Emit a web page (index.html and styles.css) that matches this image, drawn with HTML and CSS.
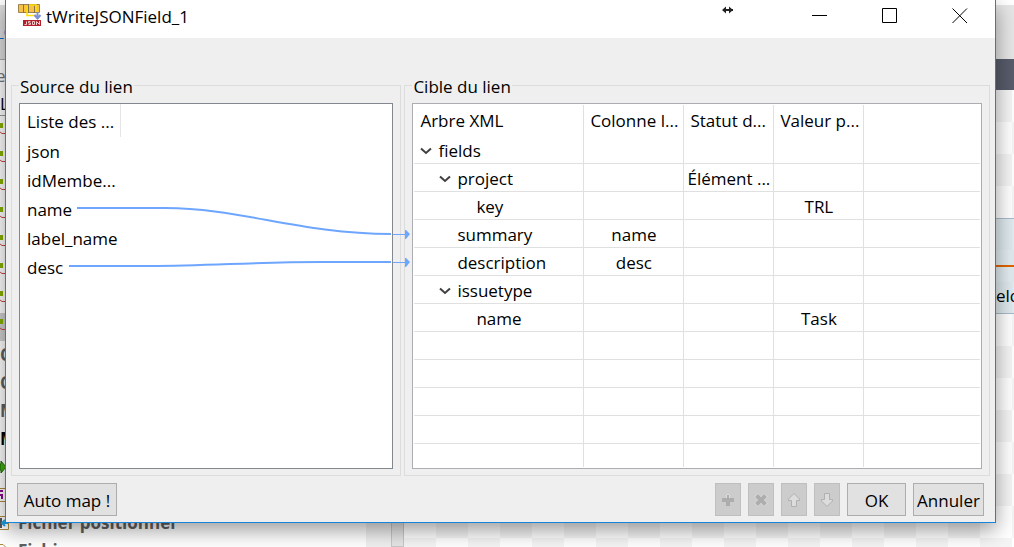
FILE: index.html
```
<!DOCTYPE html>
<html lang="fr">
<head>
<meta charset="utf-8">
<title>tWriteJSONField_1</title>
<link rel="stylesheet" href="styles.css">
</head>
<body>
<div class="workspace">
  <aside class="palette">
    <div class="palette-tools"><a class="palette-link" href="#">_e</a></div>
    <div class="palette-head"><span class="muted">e</span><span>L</span></div>
    <ul class="palette-tree">
      <li><svg class="mark" viewBox="0 0 6 28"><path d="M0 6h3v5H0z" fill="#86b200"/><path d="M0 15l2 1.500h4" fill="none" stroke="#c44"/></svg></li>
      <li><svg class="mark" viewBox="0 0 6 28"><path d="M0 6h3v5H0z" fill="#86b200"/><path d="M0 15l2 1.500h4" fill="none" stroke="#c44"/></svg></li>
      <li><svg class="mark" viewBox="0 0 6 28"><path d="M0 6h3v5H0z" fill="#86b200"/><path d="M0 15l2 1.500h4" fill="none" stroke="#c44"/></svg></li>
      <li><svg class="mark" viewBox="0 0 6 28"><path d="M0 6h3v5H0z" fill="#86b200"/><path d="M0 15l2 1.500h4" fill="none" stroke="#c44"/></svg></li>
      <li><svg class="mark" viewBox="0 0 6 28"><path d="M0 6h3v5H0z" fill="#86b200"/><path d="M0 15l2 1.500h4" fill="none" stroke="#c44"/></svg></li>
      <li><svg class="mark" viewBox="0 0 6 28"><path d="M0 6h3v5H0z" fill="#86b200"/><path d="M0 15l2 1.500h4" fill="none" stroke="#c44"/></svg></li>
      <li><svg class="mark" viewBox="0 0 6 28"><path d="M0 6h3v5H0z" fill="#86b200"/><path d="M0 15l2 1.500h4" fill="none" stroke="#c44"/></svg></li>
      <li class="selected"><svg class="mark" viewBox="0 0 6 28"><path d="M0 6h3v5H0z" fill="#86b200"/><path d="M0 15l2 1.500h4" fill="none" stroke="#c44"/></svg></li>
      <li>C</li>
      <li>C</li>
      <li>M</li>
      <li class="strong">M</li>
      <li><svg class="mark" viewBox="0 0 6 28"><path d="M0 11h1v-3l5 6-5 6v-3H0z" fill="#3fae10" stroke="#1c6b00"/></svg></li>
      <li><svg class="mark" viewBox="0 0 6 28"><path d="M0 7.500h6M0 20.500h6" stroke="#b08a3c"/><path d="M0 9h3v2H0zM0 13h3v5H1v-3H0z" fill="#8b0a8b"/></svg></li>
      <li><svg class="icon" viewBox="0 0 18 28"><path d="M0 7.500h8.500v13H0" fill="#fff" stroke="#b08a3c"/><path d="M1 9v10" stroke="#555" stroke-width="2"/><path d="M8 14H2m3-3l-3 3 3 3" fill="none" stroke="#1ba1e2" stroke-width="2"/></svg>Fichier positionnel</li>
      <li><svg class="icon" viewBox="0 0 18 28"><path d="M0 7.500h3l4 4v9H0" fill="#fff" stroke="#b08a3c"/></svg>Fichier</li>
    </ul>
  </aside>
  <div class="scroll-gutter"></div>
  <div class="sash"></div>
  <main class="designer">
    <div class="designer-tabs"></div>
    <div class="designer-bar"></div>
    <div class="canvas"><div class="node"><div class="node-title"></div><div class="node-label">eld</div></div></div>
  </main>
</div>

<section class="dialog" role="dialog" aria-labelledby="dialog-title">
  <header class="titlebar">
    <svg class="app-icon" viewBox="0 0 24 24">
      <path d="M.5.500h21v8H.5z" fill="#f7c24a" stroke="#9c8350"/>
      <path d="M5.500 0v9M10.500 0v9M16.500 0v9" stroke="#8a7448"/>
      <path d="M9 2v9.500h9M11 1h7v7" fill="none" stroke="#ffe000" stroke-width="1.500"/>
      <path d="M19.500 8v5M16.500 11l3 3.500 3-3.500" fill="none" stroke="#7f8fd6" stroke-width="2"/>
      <path d="M5 16h18v6H5z" fill="#b3202c"/>
      <path d="M8.500 17.500v3h-2M12.500 17.500h-2v1.500h2v1.500h-2M14.500 17.500h2v3h-2zM18.500 21v-3.500l3 3v-3.500" fill="none" stroke="#f3c8ca"/>
    </svg>
    <h1 id="dialog-title">tWriteJSONField_1</h1>
    <svg class="pointer" viewBox="0 0 12 8"><path d="M1 4h10" stroke="#222" stroke-width="2"/><path d="M0 4l4-3.500v7zM11 4L7 .5v7z" fill="#222"/></svg>
    <div class="window-buttons">
      <button aria-label="Réduire"><svg viewBox="0 0 16 16"><path d="M0 7.500h15"/></svg></button>
      <button aria-label="Agrandir"><svg viewBox="0 0 16 16"><path d="M.5.500h14v14H.5z"/></svg></button>
      <button aria-label="Fermer"><svg viewBox="0 0 16 16"><path d="M.5.500l14.500 14.500M15 .5L.5 15"/></svg></button>
    </div>
  </header>

  <div class="mapper">
    <fieldset class="group">
      <legend>Source du lien</legend>
      <div class="box source-box">
        <table class="source">
          <thead><tr><th>Liste des ...</th></tr></thead>
          <tbody>
            <tr><td>json</td></tr>
            <tr><td>idMembe...</td></tr>
            <tr><td>name</td></tr>
            <tr><td>label_name</td></tr>
            <tr><td>desc</td></tr>
          </tbody>
        </table>
      </div>
    </fieldset>
    <fieldset class="group">
      <legend>Cible du lien</legend>
      <div class="box target-box">
        <table class="target">
          <colgroup><col class="c-tree"><col class="c-link"><col class="c-status"><col class="c-value"><col></colgroup>
          <thead><tr><th>Arbre XML</th><th>Colonne l...</th><th>Statut d...</th><th>Valeur p...</th><th></th></tr></thead>
          <tbody>
            <tr><td class="l0"><svg class="chev" viewBox="0 0 12 8"><path d="M1 1.500l5 4.500 5-4.500"/></svg>fields</td><td></td><td></td><td></td><td></td></tr>
            <tr><td class="l1"><svg class="chev" viewBox="0 0 12 8"><path d="M1 1.500l5 4.500 5-4.500"/></svg>project</td><td></td><td>Élément ...</td><td></td><td></td></tr>
            <tr><td class="l3">key</td><td></td><td></td><td>TRL</td><td></td></tr>
            <tr><td class="l2">summary</td><td>name</td><td></td><td></td><td></td></tr>
            <tr><td class="l2">description</td><td>desc</td><td></td><td></td><td></td></tr>
            <tr><td class="l1"><svg class="chev" viewBox="0 0 12 8"><path d="M1 1.500l5 4.500 5-4.500"/></svg>issuetype</td><td></td><td></td><td></td><td></td></tr>
            <tr><td class="l3">name</td><td></td><td></td><td>Task</td><td></td></tr>
            <tr><td></td><td></td><td></td><td></td><td></td></tr>
            <tr><td></td><td></td><td></td><td></td><td></td></tr>
            <tr><td></td><td></td><td></td><td></td><td></td></tr>
            <tr><td></td><td></td><td></td><td></td><td></td></tr>
            <tr class="rest"><td></td><td></td><td></td><td></td><td></td></tr>
          </tbody>
        </table>
      </div>
    </fieldset>
    <svg class="links" width="400" height="210">
      <path d="M66 135h88C229 135 289 161 380 161" stroke-width="2"/>
      <path d="M58 193h80C200 193 240 189 310 189h70" stroke-width="2"/>
      <path d="M382 161.500h12M382 189.500h12"/>
      <path class="head" d="M394 157h1l4 4-4 5h-1zM394 185h1l4 4-4 5h-1z"/>
    </svg>
  </div>

  <footer class="actions">
    <button class="btn auto">Auto map !</button>
    <button class="btn tool" disabled aria-label="Ajouter"><svg viewBox="0 0 14 14"><path d="M5 1h4v4h4v4H9v4H5V9H1V5h4z" fill="#adadad"/><path d="M5.500 5V1.500h3V5" fill="none" stroke="#ddd"/></svg></button>
    <button class="btn tool" disabled aria-label="Supprimer"><svg viewBox="0 0 14 14"><path d="M2 2l10 10M12 2L2 12" stroke="#ddd" stroke-width="5"/><path d="M2.500 2.500l9 9M11.500 2.500l-9 9" stroke="#adadad" stroke-width="4"/></svg></button>
    <button class="btn tool" disabled aria-label="Monter"><svg viewBox="0 0 14 14"><path d="M7 .5l5.500 5.500v1.500h-3v6h-5v-6h-3V6z" fill="#dcdcdc" stroke="#b0b0b0"/></svg></button>
    <button class="btn tool" disabled aria-label="Descendre"><svg viewBox="0 0 14 14"><path d="M7 13.500l5.500-5.500V6.500h-3v-6h-5v6h-3V8z" fill="#dcdcdc" stroke="#b0b0b0"/></svg></button>
    <button class="btn ok">OK</button>
    <button class="btn cancel">Annuler</button>
  </footer>
</section>
</body>
</html>
```
FILE: styles.css
```
* { box-sizing: border-box; }

body {
  margin: 0;
  height: 100vh;
  overflow: hidden;
  position: relative;
  font: 17px/24px "Open Sans", "Noto Sans", sans-serif;
  color: #000;
  background: #fff;
}

svg { display: block; flex: none; }

/* Workspace behind the dialog */
.workspace {
  display: grid;
  grid-template-columns: 366px 25px 13px 1fr;
  height: 100%;
}
.palette { min-width: 0; overflow: hidden; }
.palette-tools {
  height: 60px;
  padding-top: 14px;
  border-top: 5px solid #fff;
  border-bottom: 1px solid #aaa;
  background: #ddd;
}
.palette-link { color: #0066cc; text-decoration: none; margin-left: -4px; }
.palette-head {
  display: flex;
  flex-direction: column;
  gap: 4px;
  height: 56px;
  padding-top: 4px;
  border-bottom: 1px solid #999;
}
.muted { color: #777; margin-left: -4px; }
.palette-tree {
  margin: 0;
  padding: 1px 0 0;
  list-style: none;
  font-weight: bold;
  color: #606060;
}
.palette-tree li { display: flex; align-items: center; height: 28px; }
.palette-tree .selected { background: #d0d0d0; }
.palette-tree .strong { color: #000; }
.mark { width: 6px; height: 28px; }
.icon { width: 18px; height: 28px; }
.scroll-gutter { background: #f0f0f0; }
.sash { background: #e6e6e6; border: 1px solid #c8c8c8; }
.designer { display: flex; flex-direction: column; min-width: 0; }
.designer-tabs { height: 59px; border-top: 5px solid #fff; background: #e6e6e6; }
.designer-bar { height: 31px; background: #585c6b; }
.canvas {
  flex: 1;
  padding-top: 128px;
  background: repeating-conic-gradient(#fff 0 25%, #f5f5f5 0 50%) 0 0 / 64px 64px;
}
.node {
  border: solid #a9bccb;
  border-width: 1px 0;
  background: rgba(214, 228, 233, .7);
}
.node-title { height: 48px; border-bottom: 2px solid #e06400; }
.node-label { height: 46px; padding: 17px 0 0 592px; white-space: nowrap; overflow: hidden; }

/* Dialog window */
.dialog {
  position: absolute;
  inset: 0 18px 24px 5px;
  display: flex;
  flex-direction: column;
  border: 1px solid #1883d7;
  border-top: 0;
  background: #efefef;
  box-shadow: 0 7px 20px rgba(0, 0, 0, .4);
}
.titlebar {
  position: relative;
  display: flex;
  align-items: flex-start;
  height: 38px;
  padding: 4px 0 0 12px;
  background: #fff;
}
.app-icon { width: 24px; height: 24px; }
.titlebar h1 { margin: 0 auto 0 4px; font-size: 17px; font-weight: normal; line-height: 26px; }
.pointer { position: absolute; top: 6px; right: 261px; width: 12px; height: 8px; }
.window-buttons { display: flex; }
.window-buttons button {
  display: flex;
  justify-content: center;
  align-items: center;
  width: 70px;
  height: 24px;
  padding: 0;
  border: 0;
  background: none;
}
.window-buttons svg { width: 16px; height: 16px; fill: none; stroke: #000; }

.mapper {
  position: relative;
  flex: 1;
  display: grid;
  grid-template-columns: 2fr 3fr;
  gap: 3px;
  padding: 35px 5px 0;
}
.group {
  display: flex;
  min-width: 0;
  margin: 0;
  padding: 6px 7px;
  border: 1px solid #dcdcdc;
}
.group legend { padding: 4px 1px 0; line-height: 20px; }
.box { flex: 1; min-width: 0; border: 1px solid #828790; background: #fff; overflow: hidden; }
.target-box { border-color: #abadb3; padding: 1px; }

table { border-collapse: separate; border-spacing: 0; }
th, td { padding: 0; font-weight: normal; text-align: left; white-space: nowrap; }
.source th {
  height: 33px;
  padding: 2px 6px 0 7px;
  border-right: 1px solid #e5e5e5;
}
.source td { height: 29px; padding-left: 7px; }

.target { width: 100%; height: 100%; table-layout: fixed; }
.c-tree { width: 170px; }
.c-link { width: 100px; }
.c-status, .c-value { width: 90px; }
.target th { height: 31px; padding: 1px 0 0 6px; border-right: 1px solid #e0e0e0; }
.target td {
  height: 28px;
  padding-top: 2px;
  border: solid #e0e0e0;
  border-width: 0 1px 1px 0;
  text-align: center;
}
.target td:first-child { text-align: left; }
.target th:last-child, .target td:last-child { border-right: 0; }
.target .rest td { height: auto; border-bottom: 0; }
.target .l0 { padding-left: 6px; }
.target .l1 { padding-left: 25px; }
.target .l2 { padding-left: 43px; }
.target .l3 { padding-left: 62px; }
.chev {
  display: inline-block;
  width: 12px;
  height: 8px;
  margin-right: 6px;
  vertical-align: 2px;
  fill: none;
  stroke: #404040;
  stroke-width: 2;
}

.links {
  position: absolute;
  top: 35px;
  left: 5px;
  fill: none;
  stroke: #6ea6ff;
  pointer-events: none;
}
.links .head { fill: #6ea6ff; stroke: none; }

.actions { display: flex; gap: 7px; padding: 7px 11px 6px; }
.btn {
  display: flex;
  justify-content: center;
  align-items: center;
  height: 33px;
  padding: 2px 3px 0;
  border: 1px solid #adadad;
  background: #e1e1e1;
  color: #000;
  font: inherit;
  white-space: nowrap;
}
.auto { min-width: 100px; margin-right: auto; }
.ok { min-width: 59px; }
.cancel { min-width: 71px; }
.tool { width: 26px; padding: 0; border-color: #bfbfbf; background: #ccc; }
.tool svg { width: 14px; height: 14px; }
```
